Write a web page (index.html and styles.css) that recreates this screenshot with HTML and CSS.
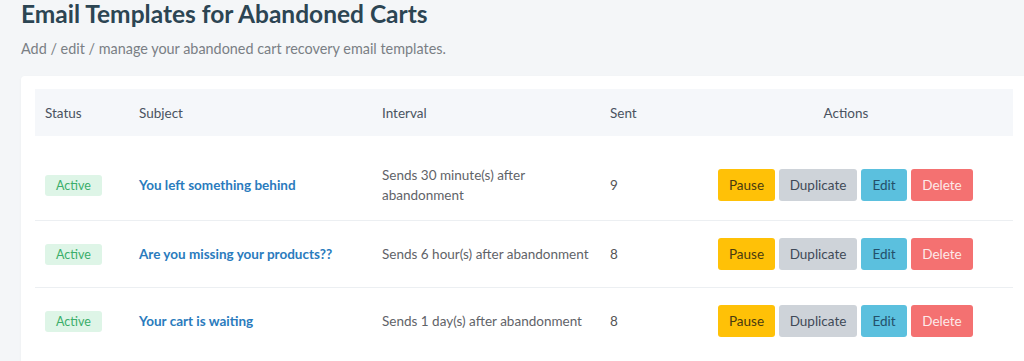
FILE: index.html
```html
<!DOCTYPE html>
<html lang="en">
<head>
    <meta charset="UTF-8">
    <meta name="viewport" content="width=device-width, initial-scale=1.0">
    <title>Email Templates | Abandoned Carts</title>
    <link rel="stylesheet" href="styles.css">
</head>
<body>
    <div class="page">
        <h1 class="page-title">Email Templates for Abandoned Carts</h1>
        <p class="page-desc">Add / edit / manage your abandoned cart recovery email templates.</p>

        <div class="card">
            <table class="templates">
                <thead>
                    <tr>
                        <th class="col-status">Status</th>
                        <th class="col-subject">Subject</th>
                        <th class="col-interval">Interval</th>
                        <th class="col-sent">Sent</th>
                        <th class="col-actions">Actions</th>
                    </tr>
                </thead>
                <tbody>
                    <tr>
                        <td><span class="badge active">Active</span></td>
                        <td><a href="#" class="subject">You left something behind</a></td>
                        <td class="interval">Sends 30 minute(s) after abandonment</td>
                        <td class="sent">9</td>
                        <td>
                            <div class="actions">
                                <button class="btn btn-pause">Pause</button>
                                <button class="btn btn-duplicate">Duplicate</button>
                                <button class="btn btn-edit">Edit</button>
                                <button class="btn btn-delete">Delete</button>
                            </div>
                        </td>
                    </tr>
                    <tr>
                        <td><span class="badge active">Active</span></td>
                        <td><a href="#" class="subject">Are you missing your products??</a></td>
                        <td class="interval">Sends 6 hour(s) after abandonment</td>
                        <td class="sent">8</td>
                        <td>
                            <div class="actions">
                                <button class="btn btn-pause">Pause</button>
                                <button class="btn btn-duplicate">Duplicate</button>
                                <button class="btn btn-edit">Edit</button>
                                <button class="btn btn-delete">Delete</button>
                            </div>
                        </td>
                    </tr>
                    <tr>
                        <td><span class="badge active">Active</span></td>
                        <td><a href="#" class="subject">Your cart is waiting</a></td>
                        <td class="interval">Sends 1 day(s) after abandonment</td>
                        <td class="sent">8</td>
                        <td>
                            <div class="actions">
                                <button class="btn btn-pause">Pause</button>
                                <button class="btn btn-duplicate">Duplicate</button>
                                <button class="btn btn-edit">Edit</button>
                                <button class="btn btn-delete">Delete</button>
                            </div>
                        </td>
                    </tr>
                </tbody>
            </table>
        </div>
    </div>
</body>
</html>
```

FILE: styles.css
```css
* {
    margin: 0;
    padding: 0;
    box-sizing: border-box;
}

body {
    font-family: Lato, 'Open Sans', sans-serif;
    background: #f4f6f8;
    color: #555;
    overflow: hidden;
}

.page {
    padding-left: 21px;
    width: 1040px;
}

.page-title {
    font-size: 24.5px;
    line-height: 28px;
    font-weight: 700;
    color: #2c4553;
}

.page-desc {
    margin-top: 11px;
    font-size: 14.4px;
    line-height: 20px;
    color: #7a7f85;
}

.card {
    margin-top: 17px;
    width: 1007px;
    background: white;
    border-radius: 4px 4px 0 0;
    padding: 13px 14px 8px 14px;
    box-shadow: 0 1px 3px rgba(0,0,0,0.04);
}

.templates {
    width: 978px;
    border-collapse: collapse;
    table-layout: fixed;
    font-size: 13.5px;
}

.templates th {
    background: #f5f7fa;
    height: 47px;
    padding: 0 10px;
    text-align: left;
    font-weight: 400;
    color: #4a5360;
}

.col-status { width: 94px; }
.col-subject { width: 243px; }
.col-interval { width: 228px; }
.col-sent { width: 108px; }

.templates th.col-actions {
    text-align: center;
    padding-right: 39px;
}

.templates td {
    padding: 17px 10px;
    line-height: 20px;
    border-bottom: 1px solid #eceff2;
    vertical-align: middle;
}

.templates tbody tr:first-child td {
    padding-top: 29px;
    padding-bottom: 15px;
}

.templates tbody tr:last-child td {
    border-bottom: none;
}

.templates td.interval {
    padding-right: 4px;
    color: #5f6368;
}

.sent {
    color: #555;
}

.badge {
    display: inline-block;
    width: 57px;
    height: 21px;
    line-height: 21px;
    text-align: center;
    font-size: 12.5px;
    border-radius: 3px;
}

.badge.active {
    background: #def5e7;
    color: #3aae6a;
}

.subject {
    color: #2a7bbd;
    font-weight: 700;
    text-decoration: none;
}

.actions {
    display: flex;
    gap: 4px;
}

.btn {
    font-family: inherit;
    font-size: 13.5px;
    height: 32px;
    padding: 0;
    border: none;
    border-radius: 3px;
    cursor: pointer;
}

.btn-pause { background: #ffc107; color: #4a3b10; width: 57px; }
.btn-duplicate { background: #ced3d9; color: #3f4a57; width: 78px; }
.btn-edit { background: #5bc0de; color: #24506a; width: 46px; }
.btn-delete { background: #f47171; color: #fdeaea; width: 62px; }
```
